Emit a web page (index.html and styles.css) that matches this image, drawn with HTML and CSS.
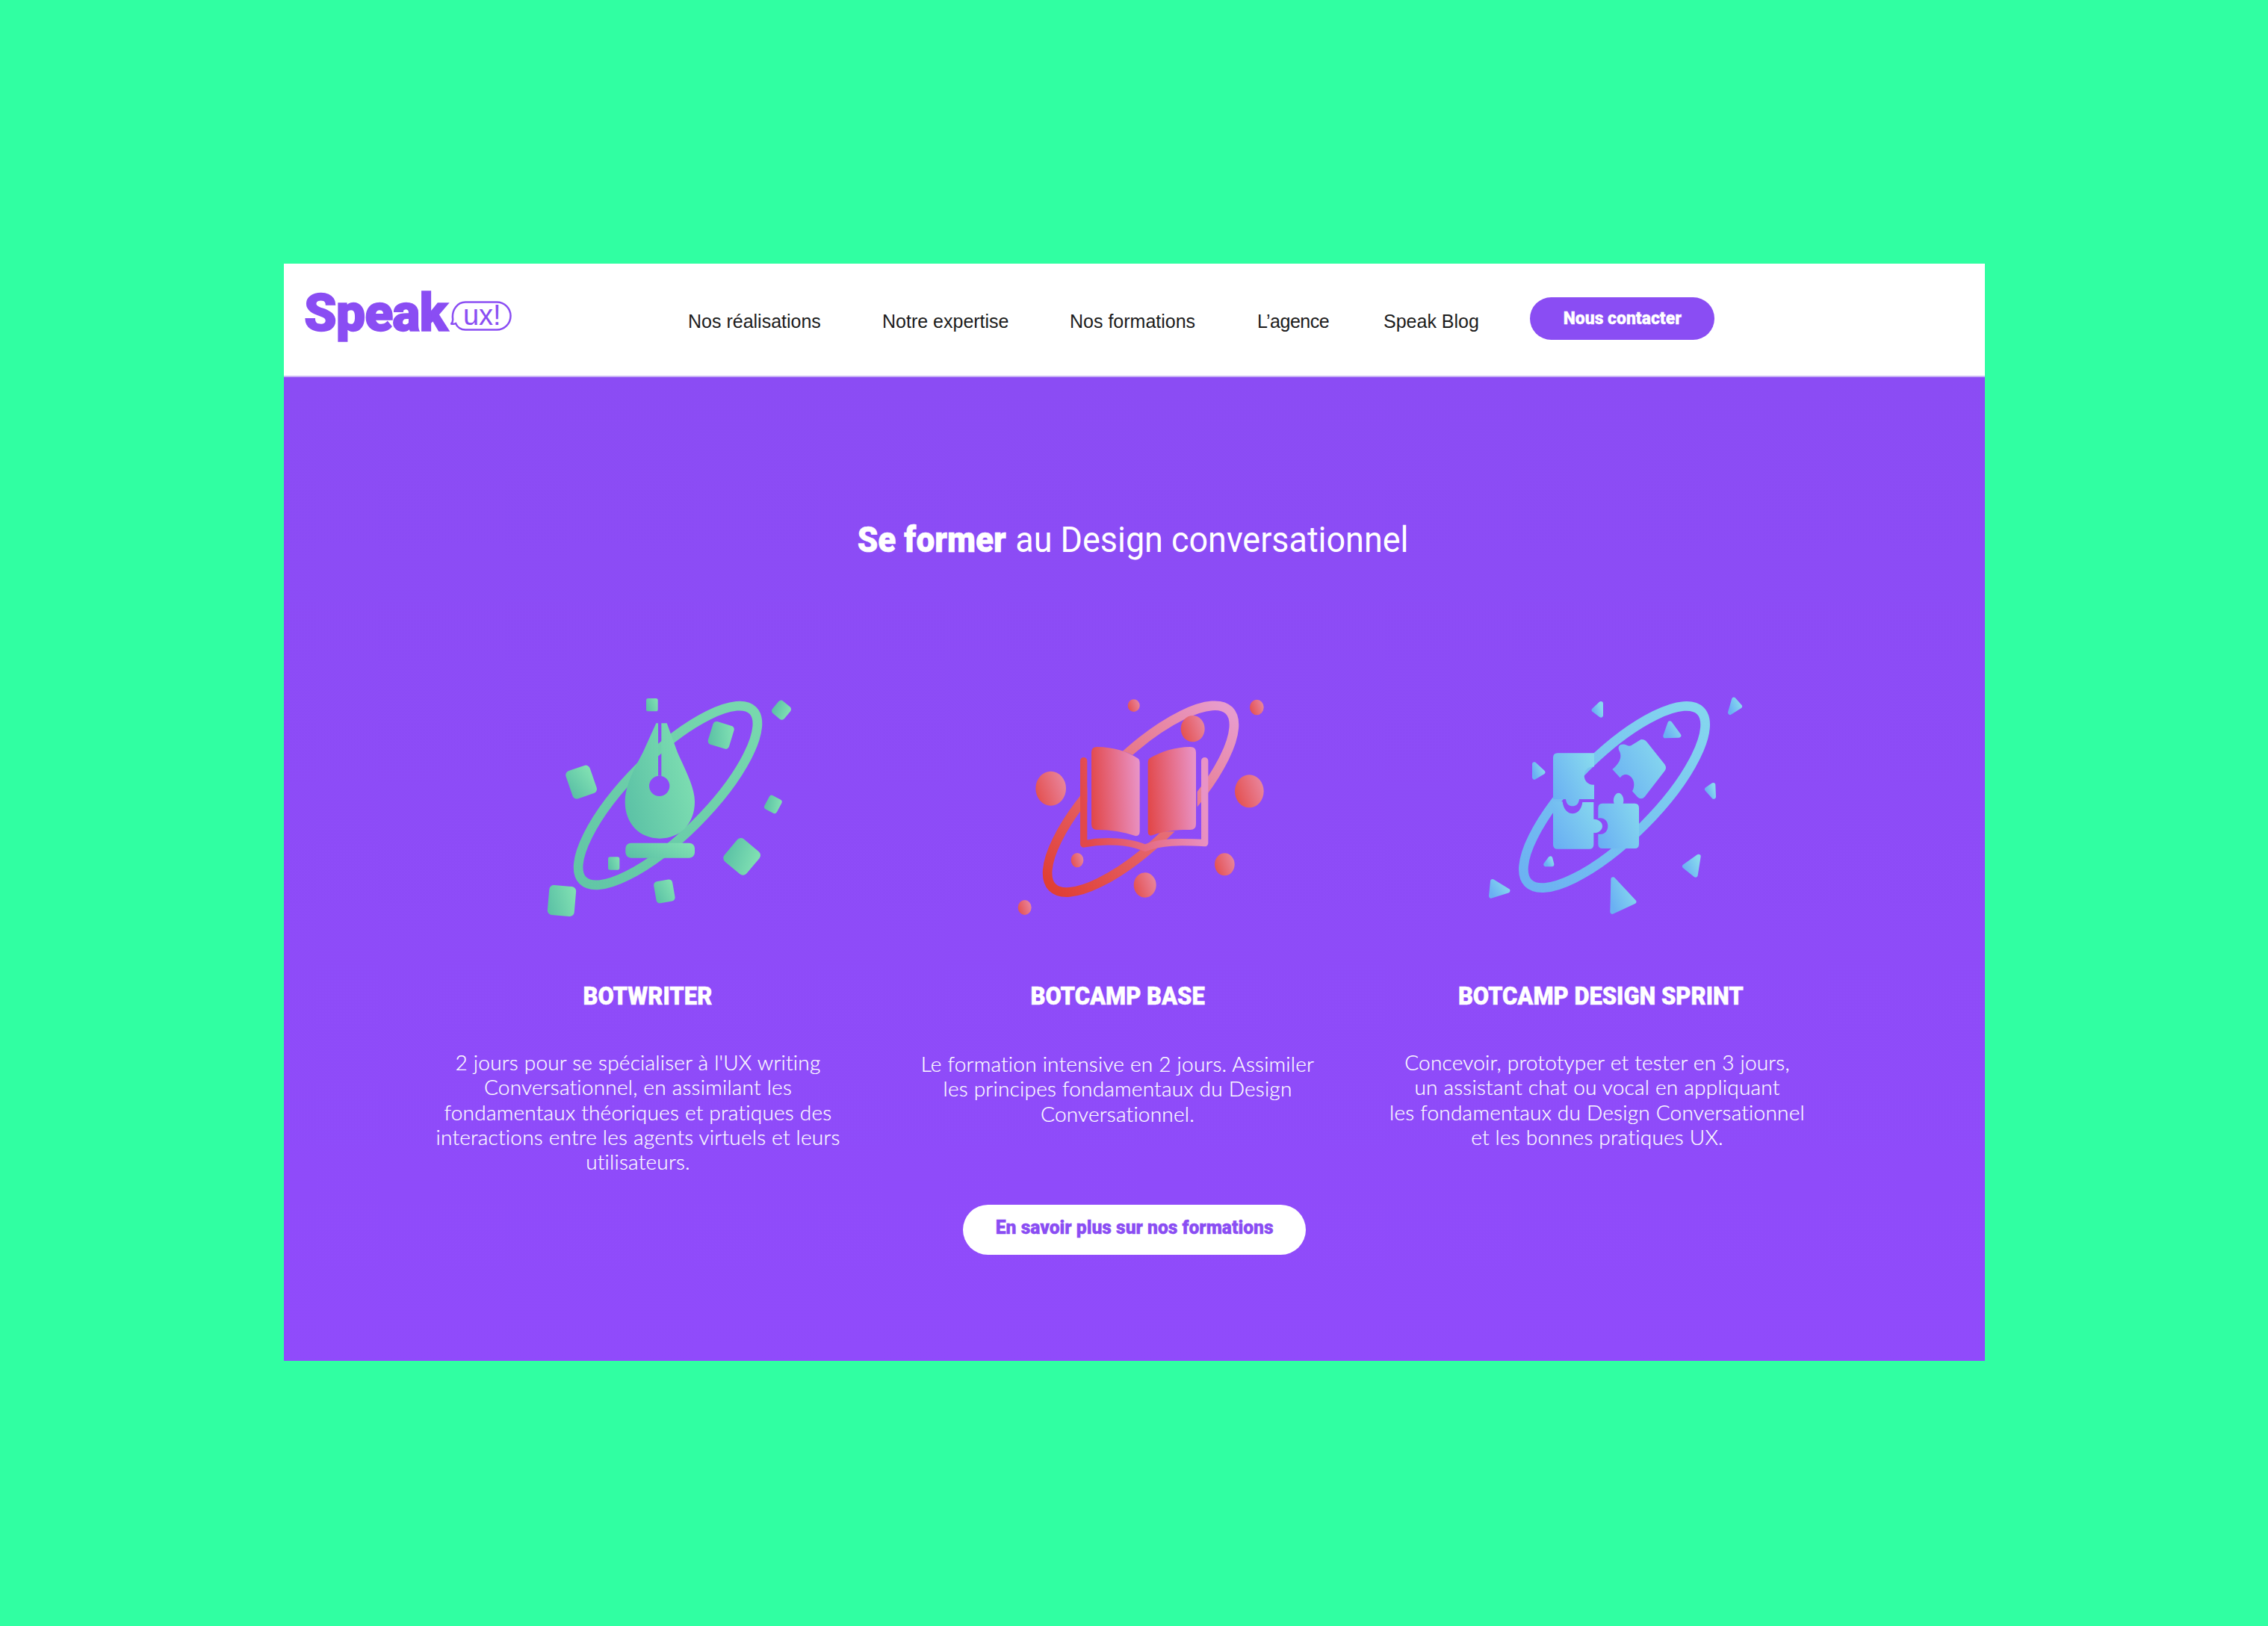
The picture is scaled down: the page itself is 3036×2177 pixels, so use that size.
FILE: index.html
```html
<!DOCTYPE html>
<html lang="fr">
<head>
<meta charset="utf-8">
<title>Speak UX</title>
<link rel="stylesheet" href="styles.css">
</head>
<body>
<svg class="defs" width="0" height="0" aria-hidden="true">
  <defs>
    <linearGradient id="green" x1="0" y1="0.7" x2="1" y2="0.3"><stop offset="0" stop-color="#5cc2a6"/><stop offset="1" stop-color="#80e0b2"/></linearGradient>
    <linearGradient id="greenRing" x1="0" y1="0" x2="1" y2="0"><stop offset="0" stop-color="#62c6a6"/><stop offset="1" stop-color="#78d8ae"/></linearGradient>
    <linearGradient id="red" x1="0" y1="0.55" x2="1" y2="0.45"><stop offset="0" stop-color="#e2484a"/><stop offset="1" stop-color="#e993c6"/></linearGradient>
    <linearGradient id="ball" x1="0" y1="0.7" x2="1" y2="0.3"><stop offset="0" stop-color="#e4504f"/><stop offset="1" stop-color="#e9869e"/></linearGradient>
    <linearGradient id="redRing" x1="0" y1="0" x2="1" y2="0"><stop offset="0" stop-color="#e03f35"/><stop offset="0.55" stop-color="#e77480"/><stop offset="1" stop-color="#e89ccc"/></linearGradient>
    <linearGradient id="blue" x1="0" y1="0.8" x2="1" y2="0.2"><stop offset="0" stop-color="#6ab0f3"/><stop offset="1" stop-color="#87d9ee"/></linearGradient>
    <linearGradient id="blueRing" x1="0" y1="0" x2="1" y2="0"><stop offset="0" stop-color="#6cb2f2"/><stop offset="1" stop-color="#84d6ee"/></linearGradient>
  </defs>
</svg>
<div class="window">
  <header class="topbar">
    <a class="logo"><span class="logo-word">Speak</span>
      <span class="logo-bubble">
        <svg class="bubble-svg" viewBox="0 0 82 42" aria-hidden="true"><path d="M20 1.500H62a18.500 18.500 0 0 1 0 37H20C14 38.500 9 35 7 30C5 31 3 31 1 30.500C3 28.500 3.500 26 3 23C2 12 9 1.500 20 1.500Z"/></svg>
        <span class="bubble-text">ux!</span>
      </span>
    </a>
    <nav class="nav">
      <a>Nos réalisations</a>
      <a>Notre expertise</a>
      <a>Nos formations</a>
      <a class="tight">L’agence</a>
      <a>Speak Blog</a>
      <a class="cta"><span class="cond">Nous contacter</span></a>
    </nav>
  </header>
  <main class="panel">
    <h1 class="headline"><strong class="cond">Se former</strong> <span class="light">au Design conversationnel</span></h1>
    <section class="courses">
      <article class="course course-a">
        <svg class="art" viewBox="0 0 1260 1080" aria-hidden="true">
          <ellipse class="ring" cx="582" cy="495" rx="483" ry="160" transform="rotate(-45 582 495)" stroke="url(#greenRing)"/>
          <g fill="url(#green)">
            <rect x="495" y="105" width="47" height="52" rx="8"/>
            <rect x="1007" y="120" width="62" height="64" rx="13" transform="rotate(40 1038 152)"/>
            <rect x="752" y="205" width="88" height="96" rx="14" transform="rotate(17 796 252)"/>
            <rect x="183" y="382" width="102" height="118" rx="18" transform="rotate(-19 235 440)"/>
            <rect x="977" y="500" width="56" height="62" rx="11" transform="rotate(28 1005 530)"/>
            <rect x="822" y="682" width="116" height="118" rx="19" transform="rotate(40 880 740)"/>
            <rect x="342" y="742" width="46" height="52" rx="8"/>
            <rect x="530" y="836" width="76" height="88" rx="14" transform="rotate(-10 568 880)"/>
            <rect x="102" y="858" width="108" height="120" rx="18" transform="rotate(5 156 918)"/>
            <path fill-rule="evenodd" d="M543 205H535L482 322C440 400 410 460 410 520C410 610 470 668 550 668C630 668 690 610 690 520C690 460 650 390 620 320L578 205H556V417H543ZM507 457a41 41 0 1 0 82 0a41 41 0 1 0 -82 0Z"/>
            <rect x="412" y="686" width="278" height="60" rx="22"/>
          </g>
        </svg>
        <h2 class="course-title"><span class="cond">BOTWRITER</span></h2>
        <p class="course-text">2 jours pour se spécialiser à l'UX writing<br>Conversationnel, en assimilant les<br>fondamentaux théoriques et pratiques des<br>interactions entre les agents virtuels et leurs<br>utilisateurs.</p>
      </article>
      <article class="course course-b">
        <svg class="art" viewBox="0 0 1260 1080" aria-hidden="true">
          <ellipse class="ring" cx="561" cy="509" rx="502" ry="170" transform="rotate(-45 561 509)" stroke="url(#redRing)"/>
          <path class="knock" d="M346 322L385 300C450 300 510 320 560 350H590C640 320 700 300 760 300H788V640H346Z"/>
          <path class="cover" d="M332 356V690C420 672 520 680 578 706C640 680 720 680 818 686V356" stroke="url(#red)"/>
          <g fill="url(#red)">
            <path d="M385 300C450 300 510 320 548 345Q557 350 557 362V640Q557 660 538 657C490 640 430 632 385 633Q363 633 363 610V322Q363 300 385 300Z"/>
            <path d="M760 300C700 300 640 320 598 345Q590 350 590 362V640Q590 660 608 655C660 635 720 632 760 633Q783 633 783 610V322Q783 300 760 300Z"/>
          </g>
          <g fill="url(#ball)">
            <ellipse cx="533" cy="134" rx="24" ry="25"/>
            <ellipse cx="1027" cy="141" rx="28" ry="31"/>
            <ellipse cx="770" cy="227" rx="48" ry="53"/>
            <ellipse cx="200" cy="467" rx="61" ry="69"/>
            <ellipse cx="997" cy="478" rx="58" ry="66"/>
            <ellipse cx="306" cy="755" rx="25" ry="29"/>
            <ellipse cx="898" cy="772" rx="40" ry="45"/>
            <ellipse cx="578" cy="855" rx="45" ry="50"/>
            <ellipse cx="95" cy="945" rx="27" ry="30"/>
          </g>
        </svg>
        <h2 class="course-title"><span class="cond">BOTCAMP BASE</span></h2>
        <p class="course-text">Le formation intensive en 2 jours. Assimiler<br>les principes fondamentaux du Design<br>Conversationnel.</p>
      </article>
      <article class="course course-c">
        <svg class="art" viewBox="0 0 1260 1080" aria-hidden="true">
          <ellipse class="ring" cx="573" cy="501" rx="489" ry="165" transform="rotate(-45 573 501)" stroke="url(#blueRing)"/>
          <g class="tri" fill="url(#blue)" stroke="url(#blue)">
            <path d="M519 126L491 152L519 173Z"/>
            <path d="M1053 110L1077 137L1038 162Z"/>
            <path d="M796 205L832 254L778 256Z"/>
            <path d="M252 370L286 402L252 422Z"/>
            <path d="M970 453L945 470L972 500Z"/>
            <path d="M911 740L855 780L899 815Z"/>
            <path d="M316 748L298 772L322 772Z"/>
            <path d="M568 832L652 922L565 962Z"/>
            <path d="M84 840L145 878L78 899Z"/>
          </g>
          <g fill="url(#blue)">
            <path d="M345 325H492V380C470 378 452 392 452 415C452 438 470 455 492 452V510H432C430 530 418 538 405 538C392 538 380 530 378 510H327V343Q327 325 345 325Z"/>
            <path d="M327 520H365C368 550 385 568 405 568C425 568 442 550 445 522H490V590C505 590 525 600 525 618C525 636 505 648 490 645V692Q490 710 472 710H345Q327 710 327 692Z"/>
            <path d="M525 527H572C565 510 575 485 590 485C605 485 615 510 608 527H655Q672 527 672 545V690Q672 708 655 708H525Q508 708 508 690V650C530 655 547 640 547 618C547 596 530 582 508 587V545Q508 527 525 527Z"/>
            <path d="M640 295L680 270Q695 268 705 282L775 370Q785 385 775 397L695 500Q680 515 665 500L645 478C660 450 650 420 625 412C610 408 600 418 596 424L565 390C590 370 605 345 595 320C585 305 590 290 605 290C620 288 625 300 640 295Z"/>
          </g>
        </svg>
        <h2 class="course-title"><span class="cond">BOTCAMP DESIGN SPRINT</span></h2>
        <p class="course-text">Concevoir, prototyper et tester en 3 jours,<br>un assistant chat ou vocal en appliquant<br>les fondamentaux du Design Conversationnel<br>et les bonnes pratiques UX.</p>
      </article>
    </section>
    <a class="more"><span class="cond">En savoir plus sur nos formations</span></a>
  </main>
</div>
</body>
</html>
```
FILE: styles.css
```css
html, body { margin: 0; padding: 0; }
body {
  width: 3036px;
  height: 2177px;
  background: #30ffa2;
  padding: 353px 0 0 380px;
  box-sizing: border-box;
  font-family: "Liberation Sans", sans-serif;
  overflow: hidden;
}
.defs { display: block; }
.window { width: 2277px; }
.cond { display: inline-block; white-space: nowrap; font-family: "Roboto", sans-serif; font-weight: 900; }
.topbar {
  height: 152px;
  background: #fff;
  display: flex;
  align-items: flex-start;
  box-sizing: border-box;
  border-bottom: 2px solid #c9b2f5;
}
.logo {
  width: 541px;
  box-sizing: border-box;
  padding: 26px 0 0 27px;
  display: flex;
  align-items: flex-start;
  gap: 4px;
  color: #8a4df3;
}
.logo-word {
  font-family: "Roboto", sans-serif;
  font-weight: 900;
  font-size: 70px;
  line-height: 80px;
  letter-spacing: -1px;
  -webkit-text-stroke: 1.500px #8a4df3;
}
.logo-bubble {
  position: relative;
  width: 82px;
  height: 42px;
  margin-top: 24px;
}
.bubble-svg { display: block; width: 82px; height: 42px; fill: none; stroke: #8a4df3; stroke-width: 2.500; }
.bubble-text {
  position: absolute;
  inset: 0;
  text-align: center;
  font-size: 38px;
  line-height: 38px;
  padding-left: 3px;
}
.nav {
  display: grid;
  grid-template-columns: 260px 251px 251px 169px 196px 247px;
  align-items: start;
  color: #1c1c1c;
  font-size: 25px;
  line-height: 36px;
  padding-top: 59px;
}
.nav a { white-space: nowrap; }
.nav .tight { letter-spacing: -.5px; }
.nav .cta {
  margin-top: -14px;
  height: 57px;
  background: #8a4df3;
  color: #fff;
  border-radius: 29px;
  display: flex;
  align-items: center;
  justify-content: center;
  font-size: 24px;
  padding-bottom: 2px;
  box-sizing: border-box;
}
.nav .cta .cond { transform: scaleX(.955); -webkit-text-stroke: .3px #fff; }
.panel {
  height: 1317px;
  box-sizing: border-box;
  background: linear-gradient(#8b4cf4, #904bfb);
  padding-top: 188px;
  color: #fff;
}
.headline {
  margin: 0;
  padding-right: 6px;
  text-align: center;
  font-size: 48px;
  line-height: 60px;
  font-weight: 400;
}
.headline .cond { margin: 0 -8px; transform: scaleX(.92); -webkit-text-stroke: .6px #fff; }
.light {
  display: inline-block;
  margin: 0 -20px;
  font-family: "Roboto", sans-serif;
  font-weight: 400;
  transform: scaleX(.935);
}
.courses {
  margin-top: 147px;
  padding-left: 153px;
  display: grid;
  grid-template-columns: 642px 642px 642px;
}
.art { display: block; width: 420px; height: 360px; }
.course-a .art { margin-left: 167px; }
.course-b .art { margin-left: 165px; }
.course-c .art { margin-left: 153px; }
.ring { fill: none; stroke-width: 38; }
.knock { fill: #8d4bf8; }
.cover { fill: none; stroke-width: 28; stroke-linecap: round; stroke-linejoin: round; }
.tri { stroke-width: 18; stroke-linejoin: round; }
.course-title {
  margin: 53px 0 0;
  text-align: center;
  font-size: 34px;
  line-height: 40px;
}
.course-title .cond { transform: scaleX(.91); -webkit-text-stroke: .5px #fff; }
.course-a .course-title { padding-left: 26px; }
.course-c .course-title { padding-left: 10px; }
.course-text {
  margin: 53px 0 0;
  text-align: center;
  font-family: "Lato", sans-serif;
  font-weight: 300;
  font-size: 28px;
  letter-spacing: .23px;
  line-height: 33.300px;
  white-space: nowrap;
  -webkit-text-stroke: .2px #fff;
}
.course-b .course-text { margin-top: 55px; }
.more {
  display: flex;
  align-items: center;
  justify-content: center;
  width: 459px;
  height: 67px;
  margin: 41px auto 0;
  padding-bottom: 6px;
  box-sizing: border-box;
  background: #fff;
  border-radius: 34px;
  color: #8a4df3;
  font-size: 25px;
}
.more .cond { transform: scaleX(.985); -webkit-text-stroke: .4px #8a4df3; }
```
